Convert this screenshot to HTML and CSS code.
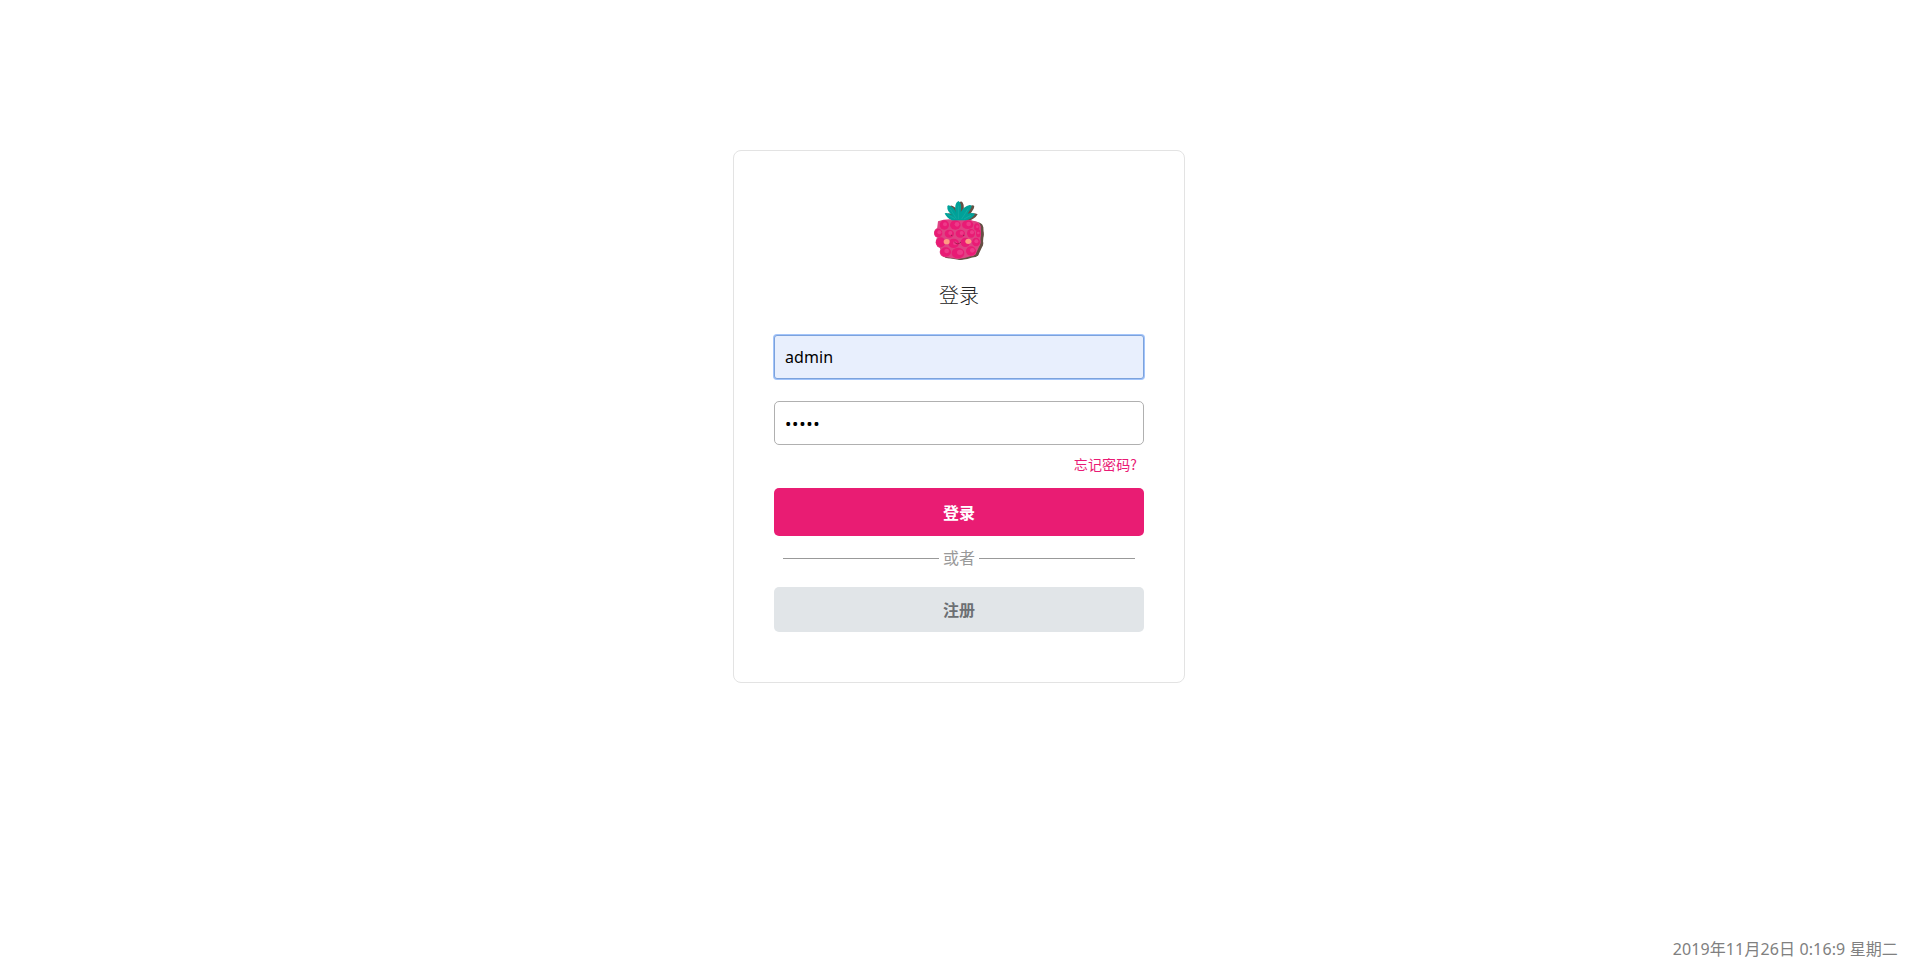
FILE: index.html
```html
<!DOCTYPE html>
<html lang="zh-CN">
<head>
<meta charset="utf-8">
<title>登录</title>
<link rel="stylesheet" href="styles.css">
</head>
<body>
<main class="card">
  <svg class="logo" viewBox="-3 0 240 240" aria-hidden="true">
    <defs>
      <g id="body">
        <path d="M54 94 Q80 84 108 90 Q140 86 172 95 L182 108 L183 128 L180 164 L166 194 L134 204 L112 207 L70 200 L58 170 L50 126Z"/>
        <circle cx="73" cy="105" r="15"/><ellipse cx="106" cy="104" rx="18" ry="15"/><ellipse cx="143" cy="103" rx="18" ry="14"/><ellipse cx="170" cy="110" rx="11" ry="13"/>
        <ellipse cx="55" cy="129" rx="13" ry="15"/><ellipse cx="174" cy="130" rx="9" ry="14"/><ellipse cx="62" cy="157" rx="15" ry="17"/><ellipse cx="168" cy="156" rx="14" ry="16"/>
        <ellipse cx="77" cy="186" rx="18" ry="16"/><ellipse cx="114" cy="189" rx="20" ry="17"/><ellipse cx="153" cy="183" rx="16" ry="16"/>
      </g>
      <path id="leaf" d="M96 91 Q79 84 74 70 Q82 66 99 77 Q80 66 82 49 Q84 43 90 47 Q104 53 107 68 Q101 42 115 33 Q127 38 122 66 Q131 49 149 45 Q158 45 153 55 L143 71 Q155 66 165 72 Q156 87 138 91Z"/>
    </defs>
    <g fill="#655044"><use href="#body" x="8" y="3"/><use href="#leaf" x="8" y="1"/></g>
    <use href="#body" fill="#df4384"/>
    <g fill="#e91b75">
      <circle cx="73" cy="105" r="14"/><ellipse cx="106" cy="105" rx="16" ry="14"/><ellipse cx="143" cy="104" rx="17" ry="13"/><ellipse cx="170" cy="111" rx="8" ry="11"/>
      <ellipse cx="55" cy="129" rx="12" ry="13"/><ellipse cx="88" cy="131" rx="14" ry="12"/><ellipse cx="121" cy="131" rx="14" ry="12"/><ellipse cx="153" cy="130" rx="12" ry="13"/><ellipse cx="175" cy="130" rx="7" ry="12"/>
      <ellipse cx="62" cy="157" rx="14" ry="15"/><ellipse cx="101" cy="160" rx="16" ry="14"/><ellipse cx="136" cy="157" rx="14" ry="14"/><ellipse cx="168" cy="156" rx="12" ry="13"/>
      <ellipse cx="77" cy="186" rx="16" ry="14"/><ellipse cx="114" cy="189" rx="19" ry="16"/><ellipse cx="153" cy="183" rx="15" ry="14"/>
    </g>
    <g fill="#ed3a89">
      <circle cx="75" cy="103" r="6"/><circle cx="111" cy="103" r="7"/><circle cx="146" cy="102" r="7"/><circle cx="172" cy="110" r="4"/>
      <circle cx="58" cy="127" r="6"/><circle cx="91" cy="129" r="6"/><circle cx="125" cy="129" r="6"/><circle cx="156" cy="127" r="6"/><circle cx="175" cy="129" r="4"/>
      <circle cx="105" cy="160" r="6"/><circle cx="169" cy="154" r="6"/><circle cx="80" cy="183" r="7"/><ellipse cx="120" cy="187" rx="9" ry="8"/><circle cx="157" cy="181" r="7"/>
    </g>
    <use href="#leaf" fill="#00a199"/>
    <path d="M83 74l22 12M91 57l18 29M115 47v40M145 56l-20 31M153 76l-21 11" fill="none" stroke="#1eaea5" stroke-width="2"/>
    <g fill="#ff9b83"><ellipse cx="80" cy="155" rx="9" ry="8"/><ellipse cx="145" cy="154" rx="9" ry="8"/></g>
    <g fill="#88234b"><circle cx="95" cy="136" r="2"/><circle cx="131" cy="136" r="2"/></g>
    <path d="M103 156Q113 167 123 156" fill="none" stroke="#9b1947" stroke-width="2.5"/>
  </svg>
  <h1 class="title">登录</h1>
  <form class="form">
    <input class="field field-active" type="text" value="admin" aria-label="用户名">
    <input class="field field-password" type="password" value="admin" aria-label="密码">
    <a class="forgot">忘记密码?</a>
    <button class="button primary" type="button">登录</button>
    <div class="divider">或者</div>
    <button class="button secondary" type="button">注册</button>
  </form>
</main>
<footer class="clock">2019年11月26日 0:16:9 星期二</footer>
</body>
</html>
```
FILE: styles.css
```css
* { box-sizing: border-box; }
body {
  margin: 0;
  height: 979px;
  padding: 150px 0 10px;
  display: flex;
  flex-direction: column;
  align-items: center;
  justify-content: space-between;
  overflow: hidden;
  background: #fff;
  font-family: "Noto Sans", "Noto Sans CJK SC", sans-serif;
  font-size: 16px;
}
.card {
  width: 452px;
  height: 533px;
  padding: 39px 40px 0;
  border: 1px solid #e3e3e3;
  border-radius: 8px;
  display: flex;
  flex-direction: column;
  align-items: center;
}
.logo { width: 80px; height: 80px; flex: none; }
.title {
  margin: 10px 0 0;
  height: 30px;
  font-family: "Noto Sans CJK SC", sans-serif;
  font-size: 20px;
  line-height: 30px;
  font-weight: 300;
  color: #222;
}
.form {
  width: 100%;
  margin-top: 25px;
  display: flex;
  flex-direction: column;
}
.field {
  width: 100%;
  height: 44px;
  padding: 0 10px;
  border: 1px solid #b0b0b0;
  border-radius: 5px;
  outline: none;
  background: #fff;
  font: 16px "Noto Sans", sans-serif;
  color: #000;
}
.field-active {
  letter-spacing: 0.1px;
  border: 1px solid #7ca2dc;
  border-radius: 3px;
  background: #e8effd;
  box-shadow: 0 0 0 1px #a2c4fa;
}
.field-password {
  margin-top: 22px;
  padding-top: 1px;
  font-size: 17px;
  letter-spacing: 0.7px;
}
.forgot {
  align-self: flex-end;
  margin: 9px 7px 0 0;
  height: 20px;
  line-height: 20px;
  font-family: "Noto Sans CJK SC", sans-serif;
  font-size: 14px;
  letter-spacing: 0.1px;
  color: #e91b75;
}
.button {
  width: 100%;
  border: 0;
  border-radius: 5px;
  padding: 0;
  font: bold 16px "Noto Sans CJK SC", sans-serif;
}
.primary { height: 48px; margin-top: 14px; background: #e91c73; color: #fff; }
.secondary { height: 45px; margin-top: 17px; padding-bottom: 2px; background: #e1e5e8; color: #6c6f73; }
.divider {
  height: 25px;
  margin: 9px 9px 0;
  display: flex;
  align-items: center;
  gap: 4px;
  font-family: "Noto Sans CJK SC", sans-serif;
  line-height: 25px;
  color: #999;
}
.divider::before, .divider::after {
  content: "";
  flex: 1;
  height: 1px;
  margin-top: 2px;
  background: #999;
}
.clock {
  align-self: flex-end;
  margin-right: 20px;
  letter-spacing: 0.12px;
  line-height: 40px;
  color: #808080;
}
```
